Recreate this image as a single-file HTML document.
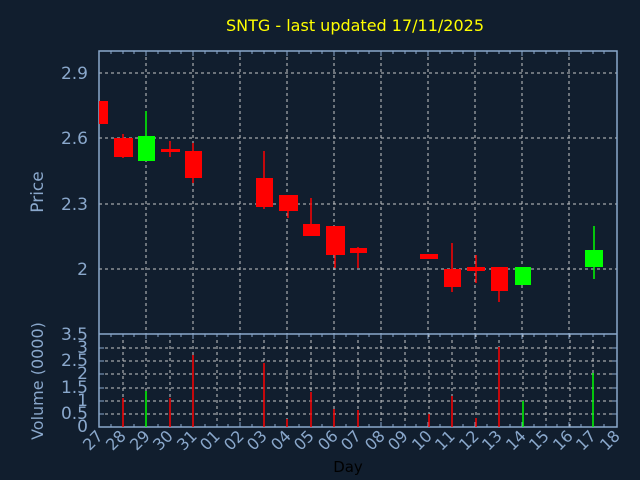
<!DOCTYPE html>
<html><head><meta charset="utf-8"><style>
html,body{margin:0;padding:0;background:#111e2e;}
svg{display:block;font-family:"DejaVu Sans","Liberation Sans",sans-serif;}
</style></head><body>
<svg width="640" height="480" viewBox="0 0 640 480" xmlns="http://www.w3.org/2000/svg">
<rect width="640" height="480" fill="#111e2e"/>
<text x="355" y="31" fill="#ffff00" font-size="16" text-anchor="middle">SNTG - last updated 17/11/2025</text>
<g stroke="#c8c8c8" stroke-dasharray="3,3" stroke-width="1">
<line x1="99" y1="73" x2="617" y2="73"/><line x1="99" y1="138" x2="617" y2="138"/><line x1="99" y1="204" x2="617" y2="204"/><line x1="99" y1="269" x2="617" y2="269"/>
<line x1="99" y1="348" x2="617" y2="348"/><line x1="99" y1="361" x2="617" y2="361"/><line x1="99" y1="374" x2="617" y2="374"/><line x1="99" y1="388" x2="617" y2="388"/><line x1="99" y1="401" x2="617" y2="401"/><line x1="99" y1="414" x2="617" y2="414"/>
<path d="M146 51V334M193 51V334M240 51V334M287 51V334M334 51V334M381 51V334M428 51V334M475 51V334M522 51V334M569 51V334"/>
<path d="M123 334V427M146 334V427M170 334V427M193 334V427M217 334V427M240 334V427M264 334V427M287 334V427M311 334V427M334 334V427M358 334V427M381 334V427M405 334V427M429 334V427M452 334V427M476 334V427M499 334V427M523 334V427M546 334V427M570 334V427M593 334V427"/>
</g>
<g stroke="#8aa8cc" stroke-width="1.5" fill="none">
<rect x="99" y="51" width="518" height="376"/>
<line x1="99" y1="334" x2="617" y2="334"/>
</g>
<g stroke="#8aa8cc" stroke-width="1">
<path d="M111 51v3M123 51v3M134 51v3M146 51v5M158 51v3M170 51v3M181 51v3M193 51v5M205 51v3M217 51v3M228 51v3M240 51v5M252 51v3M264 51v3M275 51v3M287 51v5M299 51v3M311 51v3M322 51v3M334 51v5M346 51v3M358 51v3M369 51v3M381 51v5M393 51v3M405 51v3M416 51v3M428 51v5M440 51v3M452 51v3M463 51v3M475 51v5M487 51v3M499 51v3M510 51v3M522 51v5M534 51v3M546 51v3M557 51v3M569 51v5M581 51v3M593 51v3M604 51v3"/>
<path d="M111 427v-3M123 427v-3M134 427v-3M146 427v-5M158 427v-3M170 427v-3M181 427v-3M193 427v-5M205 427v-3M217 427v-3M228 427v-3M240 427v-5M252 427v-3M264 427v-3M275 427v-3M287 427v-5M299 427v-3M311 427v-3M322 427v-3M334 427v-5M346 427v-3M358 427v-3M369 427v-3M381 427v-5M393 427v-3M405 427v-3M416 427v-3M428 427v-5M440 427v-3M452 427v-3M463 427v-3M475 427v-5M487 427v-3M499 427v-3M510 427v-3M522 427v-5M534 427v-3M546 427v-3M557 427v-3M569 427v-5M581 427v-3M593 427v-3M604 427v-3"/>
<path d="M111 334v3M123 334v3M134 334v3M146 334v5M158 334v3M170 334v3M181 334v3M193 334v5M205 334v3M217 334v3M228 334v3M240 334v5M252 334v3M264 334v3M275 334v3M287 334v5M299 334v3M311 334v3M322 334v3M334 334v5M346 334v3M358 334v3M369 334v3M381 334v5M393 334v3M405 334v3M416 334v3M428 334v5M440 334v3M452 334v3M463 334v3M475 334v5M487 334v3M499 334v3M510 334v3M522 334v5M534 334v3M546 334v3M557 334v3M569 334v5M581 334v3M593 334v3M604 334v3"/>
<path d="M99 348h5M99 361h5M99 374h5M99 388h5M99 401h5M99 414h5M617 348h-5M617 361h-5M617 374h-5M617 388h-5M617 401h-5M617 414h-5"/>
</g>
<g stroke-width="1.5">
<rect x="99" y="101" width="9" height="23" fill="#f00"/>
<line x1="123" y1="134" x2="123" y2="158" stroke="#f00"/><rect x="114" y="138" width="19" height="19" fill="#f00"/>
<line x1="146" y1="111" x2="146" y2="136" stroke="#0f0"/><rect x="138" y="136" width="17" height="25" fill="#0f0"/>
<line x1="170" y1="141" x2="170" y2="157" stroke="#f00"/><rect x="161" y="149" width="19" height="3" fill="#f00"/>
<line x1="193" y1="143" x2="193" y2="183" stroke="#f00"/><rect x="185" y="151" width="17" height="27" fill="#f00"/>
<line x1="264" y1="151" x2="264" y2="209" stroke="#f00"/><rect x="256" y="178" width="17" height="29" fill="#f00"/>
<line x1="288" y1="195" x2="288" y2="218" stroke="#f00"/><rect x="279" y="195" width="19" height="16" fill="#f00"/>
<line x1="311" y1="198" x2="311" y2="236" stroke="#f00"/><rect x="303" y="224" width="17" height="12" fill="#f00"/>
<line x1="335" y1="226" x2="335" y2="268" stroke="#f00"/><rect x="326" y="226" width="19" height="29" fill="#f00"/>
<line x1="358" y1="247" x2="358" y2="268" stroke="#f00"/><rect x="350" y="248" width="17" height="5" fill="#f00"/>
<rect x="420" y="254" width="18" height="5" fill="#f00"/>
<line x1="452" y1="243" x2="452" y2="292" stroke="#f00"/><rect x="444" y="269" width="17" height="18" fill="#f00"/>
<line x1="476" y1="255" x2="476" y2="283" stroke="#f00"/><rect x="467" y="267" width="18" height="4" fill="#f00"/>
<line x1="499" y1="267" x2="499" y2="302" stroke="#f00"/><rect x="491" y="267" width="17" height="24" fill="#f00"/>
<rect x="515" y="267" width="16" height="18" fill="#0f0"/>
<line x1="594" y1="226" x2="594" y2="279" stroke="#0f0"/><rect x="585" y="250" width="18" height="17" fill="#0f0"/>
</g>
<g stroke-width="1.5">
<line x1="123" y1="398" x2="123" y2="427" stroke="#f00"/>
<line x1="146" y1="391" x2="146" y2="427" stroke="#0f0"/>
<line x1="170" y1="398" x2="170" y2="427" stroke="#f00"/>
<line x1="193" y1="355" x2="193" y2="427" stroke="#f00"/>
<line x1="264" y1="363" x2="264" y2="427" stroke="#f00"/>
<line x1="287" y1="419" x2="287" y2="427" stroke="#f00"/>
<line x1="311" y1="392" x2="311" y2="427" stroke="#f00"/>
<line x1="334" y1="409" x2="334" y2="427" stroke="#f00"/>
<line x1="358" y1="410" x2="358" y2="427" stroke="#f00"/>
<line x1="429" y1="414" x2="429" y2="427" stroke="#f00"/>
<line x1="452" y1="396" x2="452" y2="427" stroke="#f00"/>
<line x1="476" y1="418" x2="476" y2="427" stroke="#f00"/>
<line x1="499" y1="347" x2="499" y2="427" stroke="#f00"/>
<line x1="523" y1="401" x2="523" y2="427" stroke="#0f0"/>
<line x1="593" y1="373" x2="593" y2="427" stroke="#0f0"/>
</g>
<g fill="#8aa8cc" font-size="17" text-anchor="end">
<text x="88" y="79">2.9</text><text x="88" y="144">2.6</text><text x="88" y="210">2.3</text><text x="88" y="275">2</text>
<text x="88" y="340">3.5</text><text x="88" y="353">3</text><text x="88" y="366">2.5</text><text x="88" y="379">2</text><text x="88" y="393">1.5</text><text x="88" y="406">1</text><text x="88" y="419">0.5</text><text x="88" y="432">0</text>
</g>
<text transform="translate(43,192) rotate(-90)" fill="#8aa8cc" font-size="17" text-anchor="middle">Price</text>
<text transform="translate(43,381) rotate(-90)" fill="#8aa8cc" font-size="16" text-anchor="middle">Volume (0000)</text>
<g fill="#8aa8cc" font-size="16" text-anchor="end">
<text transform="translate(104,437) rotate(-45)">27</text>
<text transform="translate(127,437) rotate(-45)">28</text>
<text transform="translate(151,437) rotate(-45)">29</text>
<text transform="translate(174,437) rotate(-45)">30</text>
<text transform="translate(198,437) rotate(-45)">31</text>
<text transform="translate(221,437) rotate(-45)">01</text>
<text transform="translate(245,437) rotate(-45)">02</text>
<text transform="translate(268,437) rotate(-45)">03</text>
<text transform="translate(292,437) rotate(-45)">04</text>
<text transform="translate(315,437) rotate(-45)">05</text>
<text transform="translate(339,437) rotate(-45)">06</text>
<text transform="translate(362,437) rotate(-45)">07</text>
<text transform="translate(386,437) rotate(-45)">08</text>
<text transform="translate(409,437) rotate(-45)">09</text>
<text transform="translate(433,437) rotate(-45)">10</text>
<text transform="translate(456,437) rotate(-45)">11</text>
<text transform="translate(480,437) rotate(-45)">12</text>
<text transform="translate(503,437) rotate(-45)">13</text>
<text transform="translate(527,437) rotate(-45)">14</text>
<text transform="translate(550,437) rotate(-45)">15</text>
<text transform="translate(574,437) rotate(-45)">16</text>
<text transform="translate(597,437) rotate(-45)">17</text>
<text transform="translate(621,437) rotate(-45)">18</text>
</g>
<text x="348" y="472" fill="#000" font-size="15" text-anchor="middle">Day</text>
</svg>
</body></html>
